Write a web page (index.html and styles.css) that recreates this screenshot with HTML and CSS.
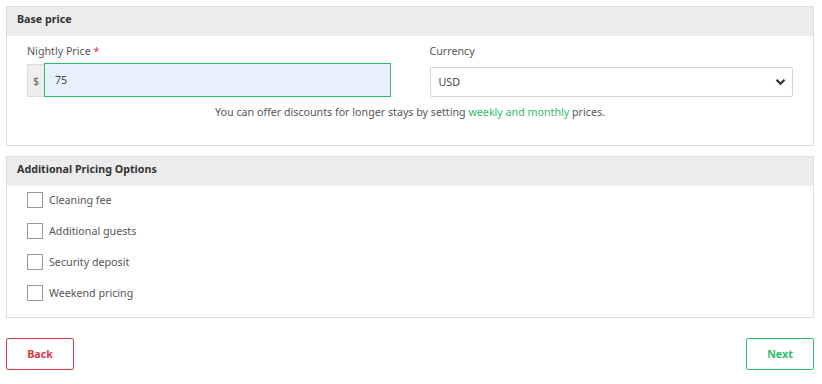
FILE: index.html
```html
<!DOCTYPE html>
<html lang="en">
<head>
  <meta charset="UTF-8" />
  <meta name="viewport" content="width=device-width, initial-scale=1.0"/>
  <title>Pricing - Listing</title>
  <link rel="stylesheet" href="styles.css">
</head>

<body>
  <!-- Base price -->
  <div class="card">
    <div class="card-header">Base price</div>
    <div class="card-body">
      <div class="form-row">
        <div class="form-col">
          <label class="field-label">Nightly Price <span class="required">*</span></label>
          <div class="input-group">
            <span class="addon">$</span>
            <input class="price-input" type="text" value="75">
          </div>
        </div>
        <div class="form-col">
          <label class="field-label">Currency</label>
          <div class="select-box">
            <span>USD</span>
            <svg class="chevron" width="11" height="8" viewBox="0 0 11 8">
              <path d="M1.5 1.8 L5.5 5.8 L9.5 1.8" fill="none" stroke="#333" stroke-width="2.2"/>
            </svg>
          </div>
        </div>
      </div>
      <p class="help-text">You can offer discounts for longer stays by setting <a href="#">weekly and monthly</a> prices.</p>
    </div>
  </div>

  <!-- Additional pricing -->
  <div class="card">
    <div class="card-header">Additional Pricing Options</div>
    <div class="card-body options">
      <label class="check-row"><span class="box"></span>Cleaning fee</label>
      <label class="check-row"><span class="box"></span>Additional guests</label>
      <label class="check-row"><span class="box"></span>Security deposit</label>
      <label class="check-row"><span class="box"></span>Weekend pricing</label>
    </div>
  </div>

  <div class="actions">
    <button class="btn btn-back">Back</button>
    <button class="btn btn-next">Next</button>
  </div>
</body>
</html>
```

FILE: styles.css
```css
:root {
  --green: #2ebd6b;
  --red: #dc3545;
  --border: #dedede;
  --text-color: #555;
}

body {
  margin: 0;
  padding: 6px 8px 6px 6px;
  font-family: 'Noto Sans', 'Open Sans', sans-serif;
  font-size: 10.7px;
  color: var(--text-color);
  background: #fff;
}

.card {
  border: 1px solid var(--border);
  margin-bottom: 10px;
}

.card-header {
  height: 29px;
  line-height: 25px;
  padding: 0 10px;
  background: #ececec;
  font-weight: 700;
  color: #333;
}

.card-body {
  padding: 7px 20px 0;
}

.form-row {
  display: flex;
  gap: 39px;
}

.form-col {
  flex: 1;
}

.field-label {
  display: block;
  line-height: 16px;
  height: 20px;
}

.required {
  color: var(--red);
}

.input-group {
  display: flex;
  height: 34px;
}

.addon {
  width: 16px;
  display: flex;
  align-items: center;
  justify-content: center;
  background: #eee;
  border: 1px solid #ddd;
  border-right: none;
  margin-top: 1px;
  height: 31px;
  color: #666;
}

.price-input {
  flex: 1;
  margin: 0;
  height: 34px;
  box-sizing: border-box;
  border: 1px solid var(--green);
  background: #e8f0fe;
  padding: 0 10px;
  font-family: inherit;
  font-size: 10.7px;
  color: #444;
  outline: none;
}

.select-box {
  margin-top: 4px;
  height: 30px;
  box-sizing: border-box;
  border: 1px solid #d5d5d5;
  border-radius: 2px;
  display: flex;
  align-items: center;
  justify-content: space-between;
  padding: 0 6px 0 8px;
  color: #444;
}

.help-text {
  text-align: center;
  line-height: 16px;
  margin: 7px 0 0;
  height: 41px;
}

.help-text a {
  color: var(--green);
  text-decoration: none;
}

.options {
  padding: 0 20px 7px;
}

.check-row {
  display: flex;
  align-items: flex-start;
  box-sizing: border-box;
  padding-top: 6px;
  line-height: 16px;
  height: 31px;
  gap: 6px;
}

.box {
  width: 14px;
  height: 14px;
  border: 1px solid #999;
  background: #fff;
}

.actions {
  display: flex;
  justify-content: space-between;
  margin-top: 20px;
}

.btn {
  width: 68px;
  height: 32px;
  background: #fff;
  font-family: inherit;
  font-size: 10.7px;
  font-weight: 700;
  border-radius: 2px;
  cursor: pointer;
}

.btn-back {
  border: 1px solid var(--red);
  color: var(--red);
}

.btn-next {
  border: 1px solid var(--green);
  color: var(--green);
}
```
